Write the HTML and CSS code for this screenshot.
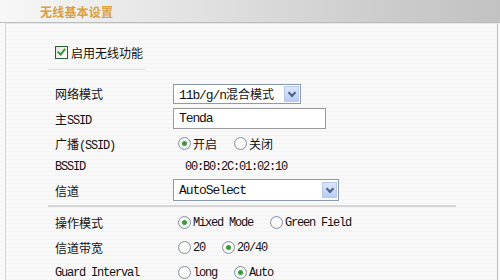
FILE: index.html
```html
<!DOCTYPE html>
<html lang="zh-CN">
<head>
    <meta charset="UTF-8">
    <title>无线基本设置</title>
    <link rel="stylesheet" href="styles.css">
</head>
<body>
    <!-- Заголовок -->
    <div class="header">
        <span class="title">无线基本设置</span>
    </div>

    <div class="panel">
        <div class="enable-row">
            <span class="checkbox checked"></span>
            <span class="cn">启用无线功能</span>
        </div>
        <div class="short-line"></div>

        <div class="row r1">
            <span class="label cn">网络模式</span>
            <div class="select sel-mode">
                <span class="select-text">11b/g/n<span class="cn">混合模式</span></span>
                <span class="arrow"></span>
            </div>
        </div>
        <div class="row r2">
            <span class="label"><span class="cn">主</span>SSID</span>
            <div class="input">Tenda</div>
        </div>
        <div class="row r3">
            <span class="label"><span class="cn">广播</span>(SSID)</span>
            <span class="radio checked"></span><span class="opt cn w-on">开启</span>
            <span class="radio"></span><span class="opt cn">关闭</span>
        </div>
        <div class="row r4">
            <span class="label">BSSID</span>
            <span class="mac">00:B0:2C:01:02:10</span>
        </div>
        <div class="row r5">
            <span class="label cn">信道</span>
            <div class="select sel-channel">
                <span class="select-text">AutoSelect</span>
                <span class="arrow"></span>
            </div>
        </div>

        <div class="long-line"></div>

        <div class="row r6">
            <span class="label cn">操作模式</span>
            <span class="radio checked"></span><span class="opt w-mixed">Mixed Mode</span>
            <span class="radio"></span><span class="opt">Green Field</span>
        </div>
        <div class="row r7">
            <span class="label cn">信道带宽</span>
            <span class="radio"></span><span class="opt w-20">20</span>
            <span class="radio checked"></span><span class="opt">20/40</span>
        </div>
        <div class="row r8">
            <span class="label">Guard Interval</span>
            <span class="radio"></span><span class="opt w-long">long</span>
            <span class="radio checked"></span><span class="opt">Auto</span>
        </div>
    </div>
</body>
</html>
```

FILE: styles.css
```css
/* Основа страницы */
body {
    margin: 0;
    width: 500px;
    height: 280px;
    overflow: hidden;
    background-color: #f8f8f8;
    font-family: "Liberation Mono", "Noto Sans CJK SC", monospace;
    font-size: 12px;
    letter-spacing: -1.2px;
    color: #111;
}

.cn {
    font-family: "Noto Sans CJK SC", sans-serif;
    font-size: 12px;
    letter-spacing: 0;
}

/* Верхняя полоса с заголовком */
.header {
    height: 22px;
    background: linear-gradient(to right, #f7f7f7 0%, #e4e4e4 35%, #cdcdcd 75%, #c2c2c2 100%);
    border-bottom: 1px solid #bdbdbd;
    display: flex;
    align-items: center;
    padding-left: 40px;
}

.title {
    font-family: "Noto Sans CJK SC", sans-serif;
    font-size: 12px;
    font-weight: bold;
    color: #d9a03c;
    letter-spacing: 0.2px;
}

/* Основная панель */
.panel {
    margin-left: 5px;
    width: 491px;
    height: 257px;
    border-left: 1px solid #d4d4d4;
    border-right: 1px solid #bcbcbc;
    border-top: 1px solid #e6e6e6;
    background: repeating-linear-gradient(to bottom, #f9f9f9 0, #f9f9f9 3px, #f3f3f3 3px, #f3f3f3 4px);
}

.enable-row {
    display: flex;
    align-items: center;
    gap: 3px;
    padding-left: 49px;
    padding-top: 21px;
    height: 14px;
}

.short-line {
    margin: 10px 0 0 42px;
    width: 97px;
    height: 1px;
    background-color: #dcdcdc;
}

.long-line {
    margin: 3px 0 0 42px;
    width: 408px;
    height: 2px;
    background-color: #d6d6d6;
}

/* Строки формы */
.row {
    display: flex;
    align-items: center;
    height: 25px;
}

.r1 { margin-top: 11px; }
.r4 { height: 22px; }
.r5 { height: 24px; }
.r6 { margin-top: 3px; }

.label {
    width: 118px;
    padding-left: 49px;
    flex-shrink: 0;
}

/* Выпадающие списки */
.select {
    height: 18px;
    border: 1px solid #8a9ab0;
    background-color: #fff;
    display: flex;
    align-items: center;
    justify-content: space-between;
    padding-left: 5px;
    padding-right: 1px;
}

.sel-mode { width: 120px; }
.sel-channel { width: 158px; height: 20px; }

.select-text {
    font-size: 13px;
    letter-spacing: -1.1px;
    white-space: nowrap;
}

.arrow {
    width: 15px;
    height: 16px;
    background: linear-gradient(to bottom, #dbe6fb, #b8cdf5);
    border: 1px solid #b6c8ec;
    box-sizing: border-box;
    position: relative;
}

/* Галочка-шеврон на кнопке списка */
.arrow::after {
    content: '';
    position: absolute;
    left: 4px;
    top: 3px;
    width: 4px;
    height: 4px;
    border-right: 2px solid #4d6185;
    border-bottom: 2px solid #4d6185;
    transform: rotate(45deg);
}

/* Поле ввода */
.input {
    width: 146px;
    height: 19px;
    border: 1px solid #9a9a9a;
    background-color: #fff;
    padding-left: 5px;
    display: flex;
    align-items: center;
    font-size: 13px;
    letter-spacing: -1.1px;
}

/* Радио-кнопки */
.radio {
    width: 11px;
    height: 11px;
    border: 1px solid #8592a6;
    border-radius: 50%;
    background: radial-gradient(circle, #ffffff 40%, #e2e2dc 100%);
    margin-left: 5px;
    margin-right: 2px;
    position: relative;
    flex-shrink: 0;
}

.radio.checked::after {
    content: '';
    position: absolute;
    left: 3px;
    top: 3px;
    width: 5px;
    height: 5px;
    border-radius: 50%;
    background-color: #3a9a3a;
}

.opt { white-space: nowrap; }
.w-on { width: 36px; }
.w-mixed { width: 72px; }
.w-20 { width: 24px; }
.w-long { width: 36px; }

.mac {
    padding-left: 12px;
}

/* Чекбокс */
.checkbox {
    width: 11px;
    height: 11px;
    border: 1px solid #2a5a3a;
    background: linear-gradient(135deg, #e4e4de, #ffffff);
    position: relative;
}

.checkbox.checked::after {
    content: '';
    position: absolute;
    left: 3px;
    top: 0px;
    width: 3px;
    height: 6px;
    border-right: 2px solid #2f9a3a;
    border-bottom: 2px solid #2f9a3a;
    transform: rotate(40deg);
}
```
